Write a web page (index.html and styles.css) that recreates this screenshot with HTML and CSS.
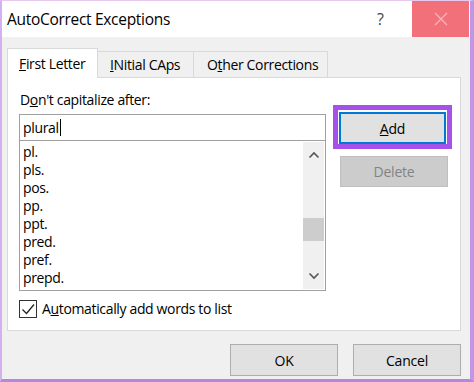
FILE: index.html
```html
<!DOCTYPE html>
<html lang="en">
  <head>
    <meta charset="UTF-8" />
    <title>AutoCorrect Exceptions</title>
    <link rel="stylesheet" href="styles.css">
  </head>
  <body>
    <div class="window">
      <div class="titlebar">
        <span class="title">AutoCorrect Exceptions</span>
        <span class="help">?</span>
        <span class="close">
          <svg width="14" height="14" viewBox="0 0 14 14">
            <path d="M1 1 L13 13 M13 1 L1 13" stroke="#f7b3b9" stroke-width="1.3" fill="none" />
          </svg>
        </span>
      </div>

      <div class="body">
        <div class="tabs">
          <div class="tab active"><u>F</u>irst Letter</div>
          <div class="tab"><u>I</u>Nitial CAps</div>
          <div class="tab">O<u>t</u>her Corrections</div>
        </div>

        <div class="panel">
          <div class="left">
            <div class="label">D<u>o</u>n't capitalize after:</div>
            <div class="input">plural<span class="caret"></span></div>
            <div class="list">
              <ul class="items">
                <li>pl.</li>
                <li>pls.</li>
                <li>pos.</li>
                <li>pp.</li>
                <li>ppt.</li>
                <li>pred.</li>
                <li>pref.</li>
                <li>prepd.</li>
              </ul>
              <div class="scrollbar">
                <svg class="arrow" width="12" height="8" viewBox="0 0 12 8">
                  <path d="M1.5 6.5 L6 2 L10.5 6.5" stroke="#555" stroke-width="1.6" fill="none" />
                </svg>
                <div class="track"><div class="thumb"></div></div>
                <svg class="arrow" width="12" height="8" viewBox="0 0 12 8">
                  <path d="M1.5 1.5 L6 6 L10.5 1.5" stroke="#555" stroke-width="1.6" fill="none" />
                </svg>
              </div>
            </div>
            <div class="check">
              <span class="box">
                <svg width="16" height="16" viewBox="0 0 16 16">
                  <path d="M2.5 8.5 L6.5 12.5 L14 3.5" stroke="#222" stroke-width="1.3" fill="none" />
                </svg>
              </span>
              <span>A<u>u</u>tomatically add words to list</span>
            </div>
          </div>

          <div class="right">
            <div class="ring"><button class="btn default"><u>A</u>dd</button></div>
            <button class="btn disabled">Delete</button>
          </div>
        </div>

        <div class="footer">
          <button class="btn">OK</button>
          <button class="btn">Cancel</button>
        </div>
      </div>
    </div>
  </body>
</html>
```

FILE: styles.css
```css
body {
  margin: 0;
  font-family: "Open Sans", "Noto Sans", sans-serif;
  font-size: 14px;
  letter-spacing: -0.35px;
  color: #000;
}
.window {
  width: 474px;
  height: 382px;
  box-sizing: border-box;
  border-top: 1px solid #e7c9f0;
  border-left: 2px solid #d3b0ee;
  border-right: 4px solid #c196e6;
  border-bottom: 3px solid #b486e0;
  background: #f0f0f0;
  display: flex;
  flex-direction: column;
}
.titlebar {
  height: 36px;
  background: #fff;
  display: flex;
  align-items: center;
  flex-shrink: 0;
}
.title {
  font-size: 15.5px;
  letter-spacing: -0.3px;
  padding-left: 5px;
  flex: 1;
}
.help {
  font-size: 16px;
  color: #444;
  width: 35px;
}
.close {
  width: 57px;
  height: 36px;
  margin-right: 1px;
  background: #f1707a;
  display: flex;
  align-items: center;
  justify-content: center;
}
.body {
  flex: 1;
  padding: 11px 9px 0 5px;
  display: flex;
  flex-direction: column;
}
.tabs {
  display: flex;
  align-items: flex-end;
  height: 29px;
  position: relative;
  z-index: 1;
}
.tab {
  height: 26px;
  box-sizing: border-box;
  border: 1px solid #d9d9d9;
  border-bottom: none;
  background: #f0f0f0;
  display: flex;
  align-items: center;
}
.tab:nth-child(1) {
  width: 91px;
  padding-left: 11px;
}
.tab:nth-child(2) {
  width: 96px;
  padding-left: 12px;
  border-left: none;
}
.tab:nth-child(3) {
  width: 134px;
  padding-left: 13px;
  border-left: none;
}
.tab.active {
  height: 30px;
  background: #fff;
  margin-bottom: -1px;
}
.panel {
  height: 254px;
  box-sizing: border-box;
  background: #fff;
  border: 1px solid #d9d9d9;
  display: flex;
  padding: 12px 0 0 11px;
  gap: 7px;
}
.left {
  width: 307px;
}
.label {
  height: 20px;
  line-height: 20px;
  padding-left: 1px;
  margin-bottom: 4px;
}
.input {
  height: 27px;
  box-sizing: border-box;
  border: 1px solid #a0a0a0;
  padding-left: 3px;
  display: flex;
  align-items: center;
}
.caret {
  display: inline-block;
  width: 1px;
  height: 17px;
  background: #000;
  margin-left: 1px;
}
.list {
  height: 150px;
  box-sizing: border-box;
  border: 1px solid #a0a0a0;
  border-top: none;
  display: flex;
  padding: 1px;
}
.items {
  list-style: none;
  margin: 0;
  padding: 1px 0 0 2px;
  flex: 1;
}
.items li {
  height: 18px;
  line-height: 18px;
}
.scrollbar {
  width: 21px;
  background: #f0f0f0;
  display: flex;
  flex-direction: column;
  align-items: center;
}
.arrow {
  margin: 9px 0;
}
.track {
  flex: 1;
  width: 100%;
  position: relative;
}
.thumb {
  position: absolute;
  left: 0;
  right: 0;
  top: 50px;
  height: 23px;
  background: #cdcdcd;
}
.check {
  display: flex;
  align-items: center;
  gap: 5px;
  margin-top: 8px;
}
.box {
  width: 18px;
  height: 18px;
  box-sizing: border-box;
  border: 1px solid #333;
  display: flex;
  align-items: center;
  justify-content: center;
}
.right {
  padding-top: 15px;
  display: flex;
  flex-direction: column;
}
.ring {
  border: 5px solid #a552e8;
  padding: 2px 1px 0 1px;
  margin-bottom: 7px;
}
.btn {
  font-family: inherit;
  font-size: 14px;
  letter-spacing: -0.2px;
  width: 107px;
  height: 32px;
  background: #e1e1e1;
  border: 1px solid #adadad;
  color: #000;
  padding: 0;
}
.btn.default {
  border: 1px solid #0078d7;
  box-shadow: inset 0 0 0 1px #0078d7;
}
.btn.disabled {
  margin-left: 7px;
  width: 108px;
  height: 31px;
  background: #cccccc;
  border-color: #bfbfbf;
  color: #838383;
}
.footer {
  display: flex;
  justify-content: flex-end;
  gap: 15px;
  margin-top: 13px;
}
.footer .btn {
  width: 108px;
}
```
